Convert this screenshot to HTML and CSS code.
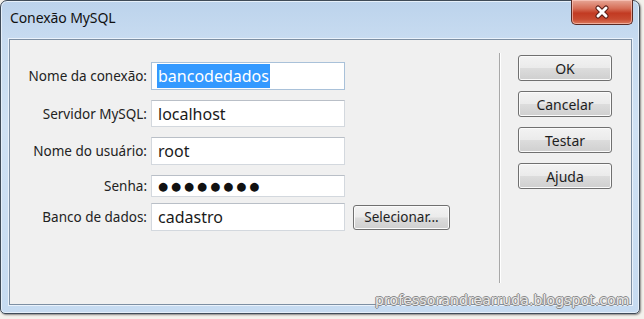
FILE: index.html
```html
<!DOCTYPE html>
<html lang="pt">
<head>
<meta charset="utf-8">
<title>Conexão MySQL</title>
<link rel="stylesheet" href="styles.css">
</head>
<body>
<div class="stage">
  <div class="window">
    <div class="titlebar">
      <span class="title">Conexão MySQL</span>
      <div class="close">
        <svg width="18" height="14" viewBox="0 0 18 14">
          <path d="M5 3 L13 11 M13 3 L5 11" stroke="#5a1d16" stroke-width="5" stroke-linecap="round"/>
          <path d="M5 3 L13 11 M13 3 L5 11" stroke="#ffffff" stroke-width="3" stroke-linecap="round"/>
        </svg>
      </div>
    </div>
    <div class="client">
      <div class="form">
        <div class="row">
          <label class="lbl">Nome da conexão:</label>
          <div class="input focus"><span class="sel">bancodedados</span></div>
        </div>
        <div class="row r2">
          <label class="lbl">Servidor MySQL:</label>
          <div class="input">localhost</div>
        </div>
        <div class="row">
          <label class="lbl">Nome do usuário:</label>
          <div class="input">root</div>
        </div>
        <div class="row pw">
          <label class="lbl">Senha:</label>
          <div class="input dots">●●●●●●●●</div>
        </div>
        <div class="row">
          <label class="lbl">Banco de dados:</label>
          <div class="input">cadastro</div>
          <button class="btn small">Selecionar...</button>
        </div>
      </div>
      <div class="sep"></div>
      <div class="actions">
        <button class="btn">OK</button>
        <button class="btn">Cancelar</button>
        <button class="btn">Testar</button>
        <button class="btn">Ajuda</button>
      </div>
    </div>
  </div>
  <div class="watermark">professorandrearruda.blogspot.com</div>
</div>
</body>
</html>
```

FILE: styles.css
```css
html, body {
  margin: 0;
  padding: 0;
}
body {
  background: #f3f1ec;
  width: 644px;
  height: 319px;
  overflow: hidden;
  font-family: "Noto Sans", "Open Sans", sans-serif;
  color: #1e1e1e;
}
.stage {
  position: relative;
  width: 644px;
  height: 319px;
}
.window {
  box-sizing: border-box;
  width: 640px;
  height: 314px;
  border: 1px solid #3f4b58;
  border-radius: 7px 7px 5px 5px;
  background: linear-gradient(180deg, #bcd3ec 0%, #c7dbf0 12%, #cfe1f3 40%, #c6dbf1 100%);
  box-shadow: 1px 1px 2px rgba(0,0,0,0.45), inset 0 0 0 1px #e6f0fa;
  display: flex;
  flex-direction: column;
}
.titlebar {
  height: 38px;
  display: flex;
  align-items: flex-start;
  flex: none;
}
.title {
  font-size: 14px;
  margin: 7px 0 0 9px;
  color: #111;
  letter-spacing: -0.1px;
}
.close {
  margin-left: auto;
  margin-right: 6px;
  margin-top: -1px;
  box-sizing: border-box;
  width: 62px;
  height: 25px;
  border: 1px solid #5a2a24;
  border-top: none;
  border-radius: 0 0 5px 5px;
  background: linear-gradient(180deg, #e7a797 0%, #d66e57 35%, #c23a22 55%, #c84a30 80%, #dc7a5e 100%);
  box-shadow: inset 0 0 0 1px rgba(255,210,200,0.6);
  display: flex;
  align-items: center;
  justify-content: center;
}
.client {
  box-sizing: border-box;
  margin: 0 7px 8px 8px;
  flex: 1;
  background: #f0f0f0;
  border: 1px solid #7d8fa3;
  box-shadow: 0 0 0 1px #eaf2fb;
  display: flex;
}
.form {
  width: 489px;
  padding-top: 22px;
  flex: none;
}
.row {
  display: flex;
  align-items: center;
  height: 28px;
  margin-bottom: 10px;
}
.row.r2 { height: 27px; }
.row.pw { height: 22px; margin-bottom: 6px; }
.lbl {
  width: 137px;
  text-align: right;
  font-size: 13.5px;
  color: #222;
  padding-right: 4px;
  flex: none;
}
.input {
  box-sizing: border-box;
  width: 194px;
  height: 100%;
  background: #ffffff;
  border: 1px solid #d3d8de;
  border-top-color: #b9bfc7;
  font-size: 16px;
  color: #1a1a1a;
  padding-left: 6px;
  display: flex;
  align-items: center;
  flex: none;
}
.input.focus {
  border-color: #a9c1d9;
}
.sel {
  background: #3399ff;
  color: #ffffff;
  line-height: 24px;
  padding: 0 1px;
  margin-left: -1px;
}
.input.dots {
  font-family: "DejaVu Sans", sans-serif;
  font-size: 11.5px;
  letter-spacing: 3px;
  color: #111;
}
.btn {
  box-sizing: border-box;
  font-family: "Noto Sans", "Open Sans", sans-serif;
  font-size: 14px;
  color: #1e1e1e;
  height: 26px;
  width: 94px;
  padding: 0;
  border: 1px solid #707070;
  border-radius: 3px;
  background: linear-gradient(180deg, #f3f3f3 0%, #ebebeb 48%, #dcdcdc 52%, #cfcfcf 100%);
  box-shadow: inset 0 0 0 1px #fbfbfb;
  display: block;
}
.btn.small {
  width: 97px;
  height: 25px;
  margin-left: 8px;
  font-size: 13.5px;
}
.sep {
  width: 1px;
  background: #a8a8a8;
  box-shadow: 1px 0 0 #ffffff;
  margin: 13px 0 21px 0;
  flex: none;
}
.actions {
  margin-left: 18px;
  padding-top: 15px;
  display: flex;
  flex-direction: column;
  gap: 10px;
}
.watermark {
  position: absolute;
  left: 375px;
  top: 292px;
  font-family: "DejaVu Sans", sans-serif;
  font-size: 14px;
  letter-spacing: 0.1px;
  color: #e8e8e8;
  text-shadow: 1px 0 0 #8a8a8a, -1px 0 0 #8a8a8a, 0 1px 0 #8a8a8a, 0 -1px 0 #8a8a8a;
  white-space: nowrap;
}
```
